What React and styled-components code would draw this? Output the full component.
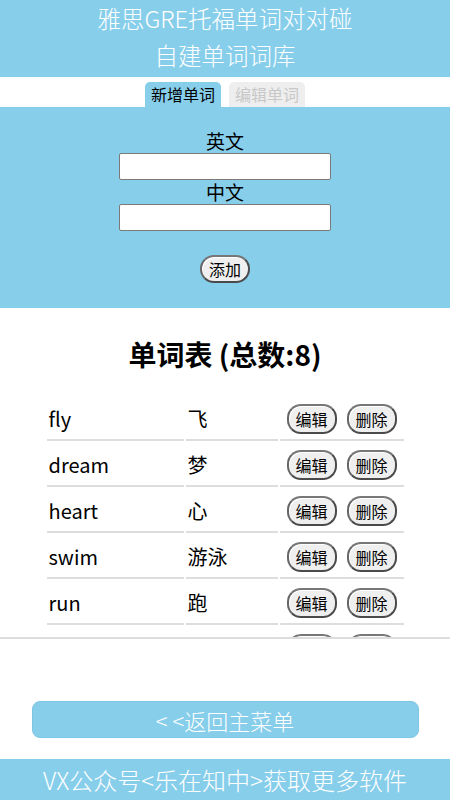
import React, { useState } from "react"
import styled, { createGlobalStyle } from "styled-components"

const SKY = "#87ceeb"

const GlobalStyle = createGlobalStyle`
  html, body {
    margin: 0;
    padding: 0;
    background: #fff;
    font-family: "Noto Sans CJK SC", "Noto Sans", sans-serif;
  }
`

const words = [
  { en: "fly", zh: "飞" },
  { en: "dream", zh: "梦" },
  { en: "heart", zh: "心" },
  { en: "swim", zh: "游泳" },
  { en: "run", zh: "跑" },
  { en: "book", zh: "书" },
  { en: "apple", zh: "苹果" },
  { en: "water", zh: "水" },
]

const App = () => {
  const [tab, setTab] = useState("add")

  return (
    <Page>
      <GlobalStyle />
      <Header>
        <div>雅思GRE托福单词对对碰</div>
        <div>自建单词词库</div>
      </Header>

      <TabBar>
        <Tab active={tab === "add"} onClick={() => setTab("add")}>
          新增单词
        </Tab>
        <Tab active={tab === "edit"} onClick={() => setTab("edit")}>
          编辑单词
        </Tab>
      </TabBar>

      <Form>
        <Label>英文</Label>
        <Input type="text" />
        <Label>中文</Label>
        <Input type="text" />
        <PillButton className="add">添加</PillButton>
      </Form>

      <ListArea>
        <ListTitle>单词表 (总数:{words.length})</ListTitle>
        <WordTable>
          <tbody>
            {words.map((w) => (
              <tr key={w.en}>
                <td className="en">{w.en}</td>
                <td className="zh">{w.zh}</td>
                <td className="ops">
                  <PillButton>编辑</PillButton>
                  <PillButton>删除</PillButton>
                </td>
              </tr>
            ))}
          </tbody>
        </WordTable>
      </ListArea>

      <BackButton>&lt; &lt;返回主菜单</BackButton>

      <Footer>VX公众号&lt;乐在知中&gt;获取更多软件</Footer>
    </Page>
  )
}

export default App

const Page = styled.div`
  width: 450px;
  height: 800px;
  overflow: hidden;
  display: flex;
  flex-direction: column;
`

const Header = styled.header`
  background: ${SKY};
  color: #fff;
  text-align: center;
  font-size: 23.5px;
  line-height: 37px;
  font-weight: 300;
  height: 77px;
  box-sizing: border-box;
`

const TabBar = styled.nav`
  height: 30px;
  display: flex;
  justify-content: center;
  align-items: flex-end;
  gap: 8px;
`

const Tab = styled.div`
  height: 25px;
  line-height: 25px;
  padding: 0 6px;
  font-size: 16px;
  border-radius: 5px 5px 0 0;
  cursor: pointer;
  background: ${({ active }) => (active ? SKY : "#eeeeee")};
  color: ${({ active }) => (active ? "#000" : "#c8c8c8")};
`

const Form = styled.section`
  background: ${SKY};
  height: 201px;
  box-sizing: border-box;
  padding-top: 22px;
  display: flex;
  flex-direction: column;
  align-items: center;

  .add {
    margin-top: 24px;
    height: 28px;
    padding: 0 7px;
  }
`

const Label = styled.label`
  font-size: 19px;
  line-height: 24px;
  color: #000;
`

const Input = styled.input`
  width: 212px;
  height: 27px;
  box-sizing: border-box;
  border: 1px solid #7a7a7a;
  border-radius: 2px;
  background: #fff;
  margin: 0;
`

const PillButton = styled.button`
  font-family: inherit;
  font-size: 16px;
  line-height: 1;
  color: #000;
  background: #efefef;
  border: 2px solid #4a4a4a;
  border-top-color: #777;
  border-left-color: #666;
  border-radius: 14px;
  height: 30px;
  padding: 0 7px;
  box-shadow: inset 1px 1px 0 #fff;
  cursor: pointer;
`

const ListArea = styled.section`
  height: 331px;
  overflow: hidden;
  border-bottom: 2px solid #dddddd;
  box-sizing: border-box;
`

const ListTitle = styled.h2`
  margin: 30px 0 25px;
  text-align: center;
  font-size: 28px;
  line-height: 32px;
  font-weight: 700;
  color: #000;
`

const WordTable = styled.table`
  width: 361px;
  margin: 0 auto;
  border-collapse: separate;
  border-spacing: 2px;
  font-size: 20px;
  color: #000;

  td {
    height: 42px;
    border-bottom: 2px solid #dddddd;
    padding: 0 2px;
    vertical-align: middle;
  }

  .en {
    width: 133px;
  }
  .zh {
    width: 88px;
  }
  .ops {
    padding-left: 7px;
    white-space: nowrap;

    button + button {
      margin-left: 10px;
    }
  }
`

const BackButton = styled.button`
  margin: 62px auto 0;
  width: 387px;
  height: 37px;
  background: ${SKY};
  color: #fff;
  border: 1px solid #7ec6e6;
  border-radius: 8px;
  font-family: inherit;
  font-size: 22px;
  line-height: 1;
  font-weight: 300;
  cursor: pointer;
`

const Footer = styled.footer`
  margin-top: 21px;
  background: ${SKY};
  color: #fff;
  text-align: center;
  font-size: 24px;
  font-weight: 300;
  line-height: 41px;
  height: 41px;
`
